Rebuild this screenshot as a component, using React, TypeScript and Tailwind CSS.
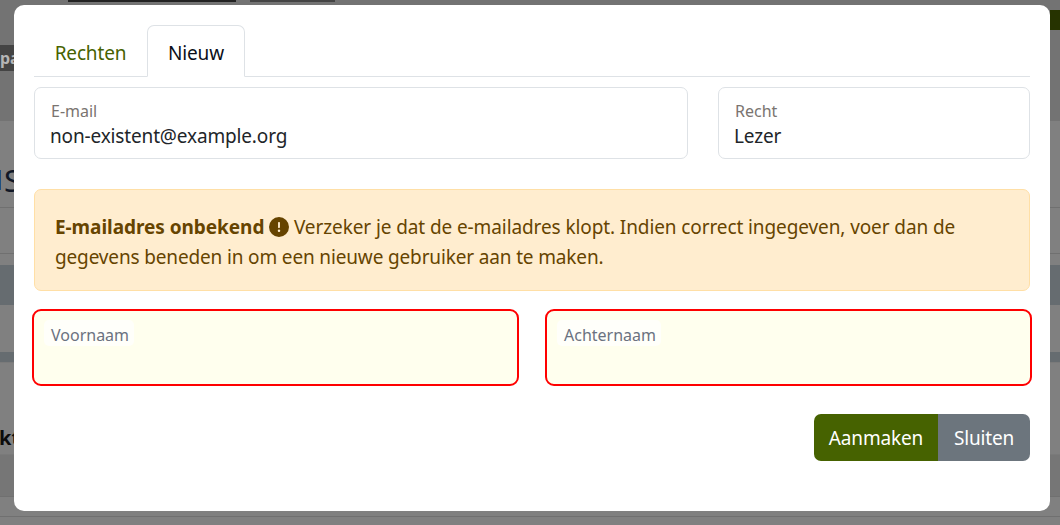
import React from 'react';
import { FaCircleExclamation } from 'react-icons/fa6';

const font = "font-['Noto_Sans',sans-serif]";

const Backdrop = () => (
  <div className={`flex flex-col h-[525px] overflow-hidden bg-[#808080] ${font}`}>
    {/* Page header, dimmed */}
    <div className="relative flex h-[121px] justify-between bg-[#737373]">
      <div className="mt-[45px] h-[26px] w-[14px] overflow-hidden bg-[#444444] text-[16px] font-bold leading-[26px] text-[#b5b5b5]">pa</div>
      <div className="mt-[10px] h-5 w-[10px] bg-[#263300]" />
      <div className="absolute left-[68px] top-0 h-[2px] w-[168px] bg-[#222222]" />
      <div className="absolute left-[250px] top-0 h-[2px] w-[85px] bg-[#444444]" />
    </div>
    {/* Page rows, dimmed */}
    <div className="flex h-[87px] items-start overflow-hidden border-b border-[#707070] pt-[49px]">
      <div className="h-5 w-px bg-[#1d4f80]" />
      <span className="ml-[3px] text-[31px] leading-[20px] text-[#111827]">S</span>
    </div>
    <div className="h-[46px] border-b border-[#707070]" />
    <div className="h-[11px]" />
    <div className="h-10 bg-[#666c70]" />
    <div className="h-[47px]" />
    <div className="h-[10px] bg-[#666c70]" />
    <div className="h-[93px] overflow-hidden border-t border-b border-[#7a7a7a] pt-[63px]">
      <div className="ml-[-1px] text-[20px] font-bold leading-[24px] text-[#0c0c0c]">kt</div>
    </div>
    <div className="h-[42px] border-b border-[#707070] bg-[#767676]" />
    <div className="h-5 border-b border-[#707070]" />
  </div>
);

const Field = ({ label, value, className }: { label: string; value: string; className: string }) => (
  <div className={`h-[72px] rounded-[7px] border border-[#dee2e6] bg-white px-[15px] pt-[12px] ${className}`}>
    <div className="pl-px text-[16px] leading-[22px] text-[#7a7470]">{label}</div>
    <div className="pt-px text-[19px] leading-[27px] tracking-[-0.15px] text-[#212529]">{value}</div>
  </div>
);

const RequiredField = ({ label }: { label: string }) => (
  <div className="h-[77px] w-[487px] rounded-[9px] border-2 border-[#ff0000] bg-[#ffffee] pl-[10px] pt-[9px]">
    <span className="block h-[26px] w-fit rounded-[5px] bg-[#fffffa] pl-[7px] pr-[5px] pt-[3px] text-[16px] leading-[24px] text-[#6b7280]">{label}</span>
  </div>
);

const App = () => {
  return (
    <div className={`relative ${font}`}>
      <Backdrop />

      {/* Modal */}
      <div className="absolute left-[14px] top-[5px] h-[506px] w-[1036px] rounded-[10px] bg-white px-[20px] pt-[20px]">
        <div className="flex h-[52px] border-b border-[#dee2e6] text-[19px] leading-[26px] tracking-[-0.15px]">
          <div className="flex w-[113px] items-center justify-center pt-[5px] text-[#466200]">Rechten</div>
          <div className="flex h-[52px] w-[98px] items-center justify-center rounded-t-[7px] border border-b-white border-[#dee2e6] bg-white pt-[4px] text-[#0b0f19]">Nieuw</div>
        </div>

        <div className="mt-[10px] flex justify-between">
          <Field label="E-mail" value="non-existent@example.org" className="w-[654px]" />
          <Field label="Recht" value="Lezer" className="w-[312px]" />
        </div>

        <div className="mt-[30px] h-[102px] rounded-[7px] border border-[#ffdfa6] bg-[#ffedcf] px-[20px] pt-[22px] text-[19px] leading-[30px] tracking-[-0.15px] text-[#664400]">
          <strong className="font-bold tracking-[-0.05px]">E-mailadres onbekend</strong>{' '}
          <FaCircleExclamation className="inline h-5 w-5 align-[-3px]" />{' '}
          <span className="tracking-[-0.1px]">Verzeker je dat de e-mailadres klopt. Indien correct ingegeven, voer dan de</span>
          <br />
          gegevens beneden in om een nieuwe gebruiker aan te maken.
        </div>

        <div className="mx-[-2px] mt-[18px] flex justify-between">
          <RequiredField label="Voornaam" />
          <RequiredField label="Achternaam" />
        </div>

        <div className="mt-[28px] flex justify-end text-[19px] tracking-[-0.15px] text-white">
          <button className="h-[47px] w-[124px] rounded-l-[7px] bg-[#466200] pt-[2px]">Aanmaken</button>
          <button className="h-[47px] w-[92px] rounded-r-[7px] bg-[#6c757d] pt-[2px]">Sluiten</button>
        </div>
      </div>
    </div>
  );
};

export default App;
